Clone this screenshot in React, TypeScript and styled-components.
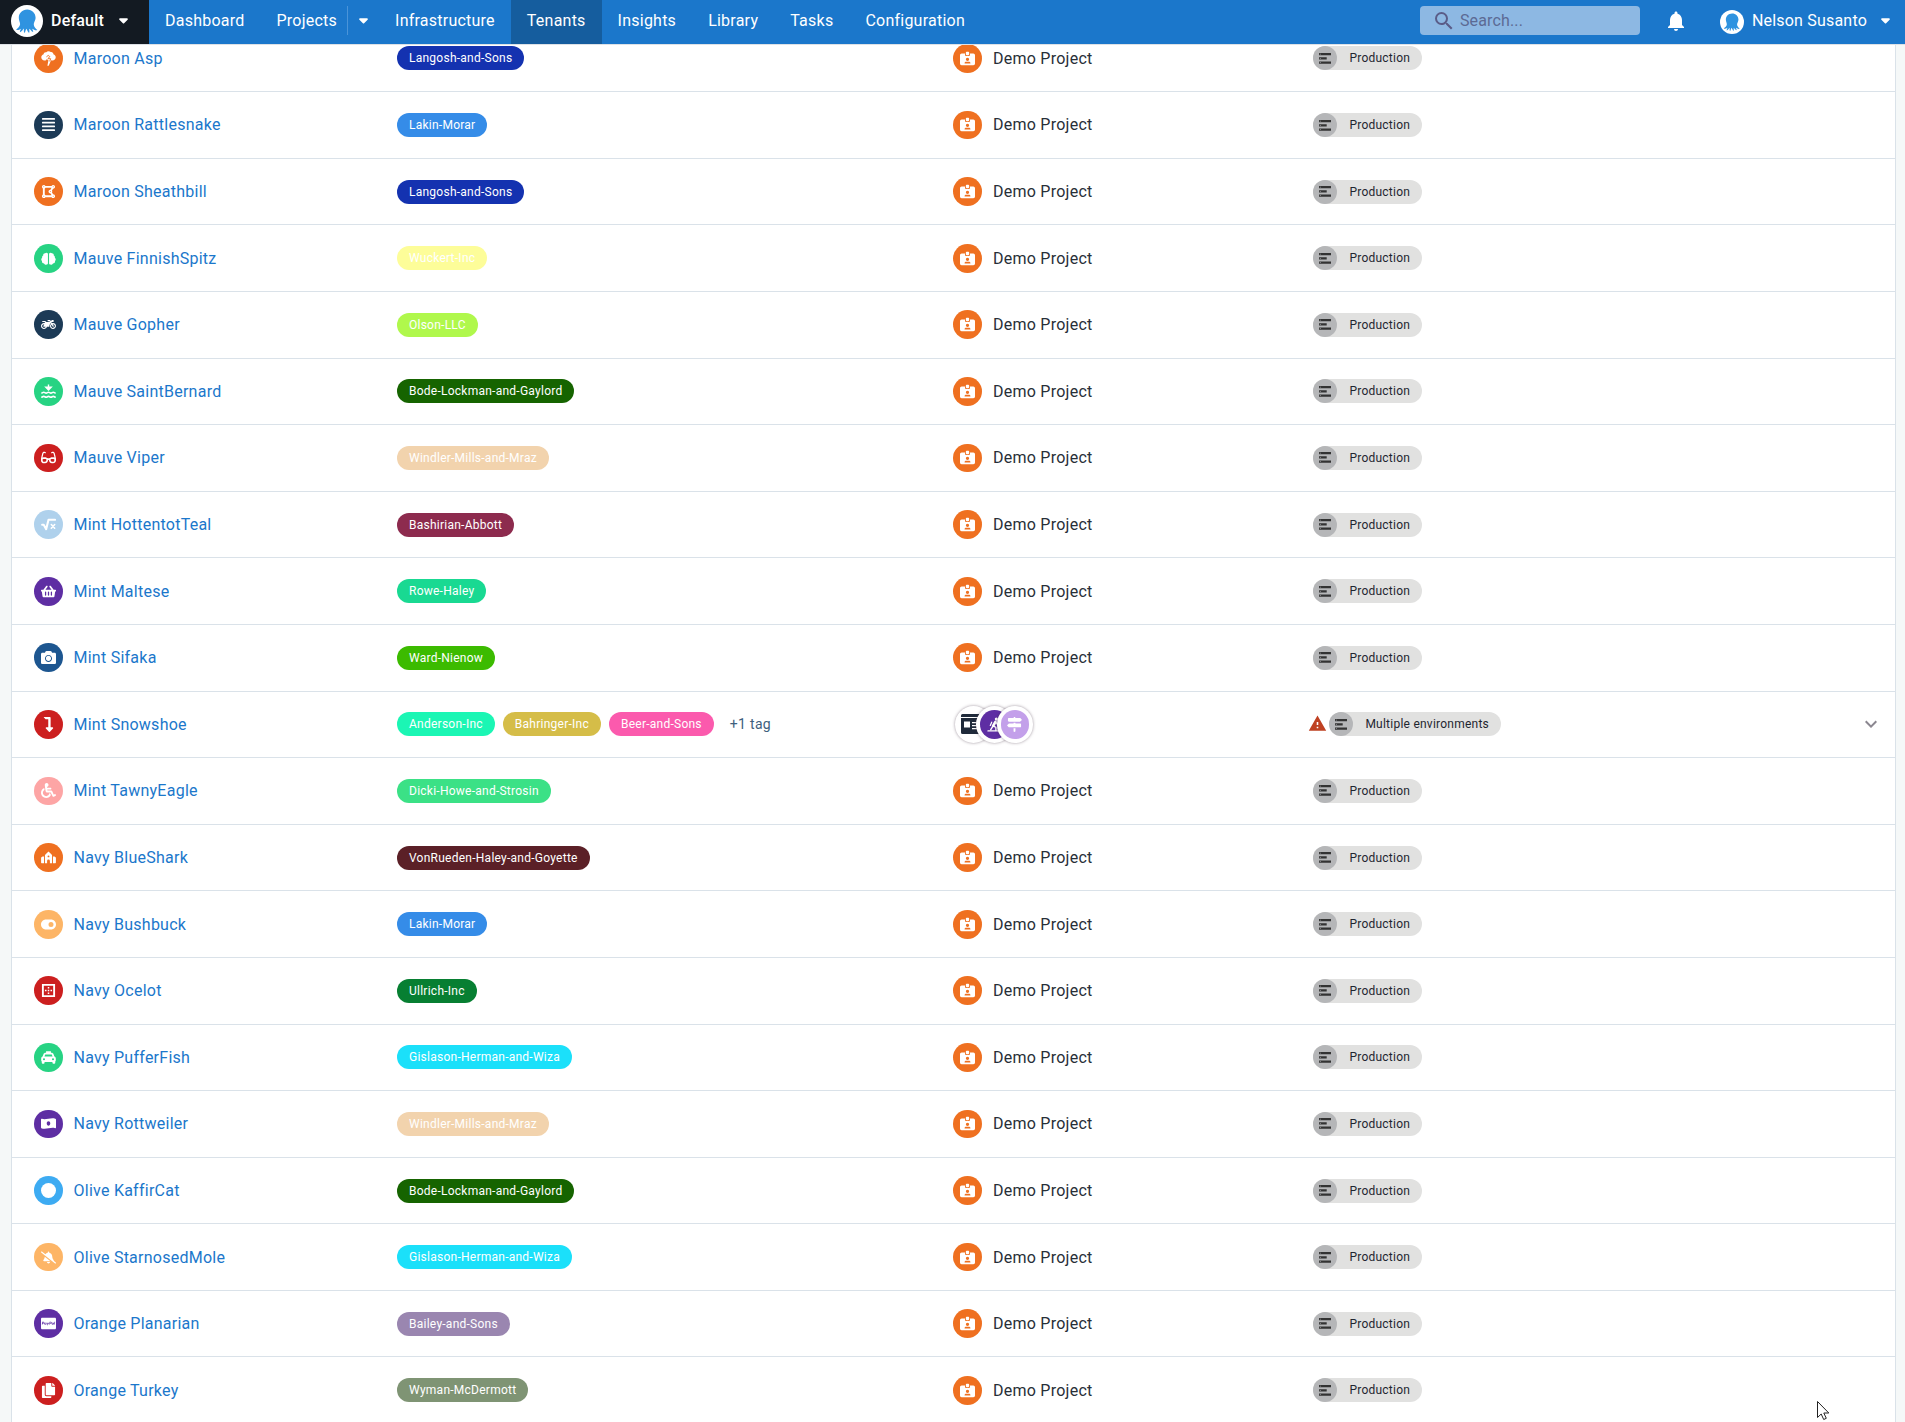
import React from "react";
import styled, { createGlobalStyle } from "styled-components";
import {
  FaAlignJustify,
  FaBellSlash,
  FaCaretDown,
  FaCcPaypal,
  FaCircle,
  FaGlasses,
  FaIdCardClip,
  FaSignsPost,
  FaToggleOn,
} from "react-icons/fa6";
import {
  FaCamera,
  FaCopy,
  FaDrawPolygon,
  FaLevelDownAlt,
  FaMotorcycle,
  FaShoppingBasket,
  FaWheelchair,
} from "react-icons/fa";
import { MdNotifications, MdSearch, MdWarning, MdKeyboardArrowDown } from "react-icons/md";

const GlobalStyle = createGlobalStyle`
  * { box-sizing: border-box; }
  html, body { margin: 0; padding: 0; }
  body {
    font-family: Roboto, "Liberation Sans", sans-serif;
    font-size: 16px;
    background: #f5f8f8;
    overflow: hidden;
  }
`;

const Page = styled.div`
  display: flex;
  flex-direction: column;
  height: 1422px;
  overflow: hidden;
  background: #f5f8f8;
`;

const Header = styled.header`
  display: flex;
  align-items: stretch;
  flex: none;
  height: 44px;
  background: #1b77cb;
  color: #fff;
  letter-spacing: 0.235px;
`;

const SpaceSwitcher = styled.button`
  display: flex;
  align-items: center;
  width: 149px;
  padding: 0 0 2px 11px;
  border: 0;
  background: #131a22;
  color: #fff;
  font: 500 16px Roboto, sans-serif;
  letter-spacing: 0.2px;
  text-align: left;
`;

const SpaceName = styled.span`
  flex: 1;
  padding: 0 0 1px 8px;
`;

const Caret = styled(FaCaretDown)<{ $right?: number; $lift?: number }>`
  flex: none;
  width: 9px;
  height: 14px;
  margin: 0 ${(p) => p.$right ?? 0}px ${(p) => p.$lift ?? 0}px 0;
`;

const Nav = styled.nav`
  display: flex;
  flex: 1;
`;

const NavItem = styled.a<{ $active?: boolean }>`
  display: flex;
  align-items: center;
  padding: 0 16px 3px;
  background: ${(p) => (p.$active ? "#155d9e" : "transparent")};
`;

const ProjectsMenu = styled.div`
  display: flex;
  align-items: center;
  width: 32px;
  height: 29px;
  margin: 6px 0 0 -6px;
  padding: 0 0 2px 11px;
  border-left: 1px solid #4a94d9;
`;

const Tools = styled.div`
  display: flex;
  align-items: center;
`;

const SearchBox = styled.div`
  display: flex;
  align-items: center;
  width: 220px;
  height: 29px;
  margin: 0 23px 3px 0;
  padding-left: 12px;
  gap: 4px;
  border-radius: 4px;
  background: #8db8e3;
  color: #5c6a94;
  letter-spacing: 0.15px;
  svg { color: #5a5c88; }
`;

const SearchHint = styled.span`
  padding-bottom: 1px;
`;

const Bell = styled.span`
  display: flex;
  width: 24px;
  margin: 0 32px 3px 1px;
`;

const UserName = styled.span`
  padding: 0 0 3px 8px;
  margin-right: 14px;
  letter-spacing: 0.2px;
`;

const Viewport = styled.main`
  flex: 1;
  min-height: 0;
  overflow: hidden;
  border-top: 1px solid #dde1e6;
`;

const Card = styled.section`
  width: 1885px;
  margin: -19.4px 0 0 11px;
  border: 1px solid #dae2e9;
  border-width: 0 1px;
  background: #fff;
`;

const Row = styled.div`
  display: grid;
  grid-template-columns: 363px 556px 360px 1fr 24px;
  align-items: center;
  height: 66.6px;
  padding: 0 12px 0 22px;
  border-bottom: 1px solid #dae2e9;
`;

const Entity = styled.div<{ $gap?: number }>`
  display: flex;
  align-items: center;
  gap: ${(p) => p.$gap ?? 10.7}px;
`;

const Disc = styled.span<{ $color: string; $glyph?: number }>`
  display: flex;
  align-items: center;
  justify-content: center;
  width: 28.8px;
  height: 28.8px;
  border-radius: 50%;
  background: ${(p) => p.$color};
  color: #fff;
  svg { width: ${(p) => p.$glyph ?? 15}px; height: ${(p) => p.$glyph ?? 15}px; }
`;

const TenantLink = styled.a`
  padding-top: 1px;
  color: #1b77cb;
  letter-spacing: 0.25px;
  line-height: 24px;
`;

const ProjectName = styled.span`
  padding-top: 1px;
  color: #282f38;
  letter-spacing: 0.25px;
  line-height: 24px;
`;

const Tags = styled.div`
  display: flex;
  align-items: center;
  gap: 8px;
`;

const Tag = styled.span<{ $color: string }>`
  height: 24px;
  padding: 0 12px;
  border-radius: 12px;
  background: ${(p) => p.$color};
  color: #fff;
  font-size: 12px;
  line-height: 24px;
  letter-spacing: 0.25px;
`;

const MoreTags = styled.span`
  margin-left: 8px;
  color: #3e607d;
  font-size: 14px;
  letter-spacing: 0.3px;
`;

const EnvCell = styled.div<{ $warn?: boolean }>`
  display: flex;
  align-items: center;
  gap: 2px;
  margin-left: ${(p) => (p.$warn ? -5 : 0)}px;
  svg.warn { color: #bf4122; margin-bottom: 2px; }
`;

const EnvChip = styled.span`
  display: flex;
  height: 24px;
  padding-right: 12px;
  gap: 12.4px;
  border-radius: 12px;
  background: #e1e1e0;
  color: #1f2630;
  font-size: 12px;
  line-height: 24px;
  letter-spacing: 0.24px;
`;

const EnvMark = styled.span`
  display: flex;
  align-items: center;
  justify-content: center;
  width: 24px;
  height: 24px;
  border-radius: 50%;
  background: #b5b6b8;
`;

const Stack = styled.div`
  display: flex;
  padding-left: 2px;
`;

const StackItem = styled.span`
  display: flex;
  padding: 4px;
  border-radius: 50%;
  background: #fff;
  box-shadow: 0 0 3px rgba(60, 40, 60, 0.5);
  & + & { margin-left: -16px; }
`;

const Expand = styled.span`
  display: flex;
  justify-content: center;
  color: #8b8790;
`;

const Pointer = styled.svg`
  position: fixed;
  left: 1816px;
  top: 1400px;
`;

const Octopus = ({ size }: { size: number }) => (
  <svg width={size} height={size} viewBox="0 0 32 32">
    <circle cx="16" cy="16" r="16" fill="#fff" />
    <path
      fill="#2f93e0"
      d="M16.2 4.6c-5 0-8.400 3.700-8.400 8.300 0 2.600 1.500 4.300 1.300 6.400-.2 2.300-2.300 3.700-4 5.400 1.800.7 3.300-.1 4.700-1-.1 1.300-1.200 2.500-.8 3.500 1.700-.5 2.700-2.200 3.800-3.600.4 1.500-.6 3.600.9 4.400.7-1.300.9-3 1.700-4.200.9 1.200 1.300 3.100 2.700 4.100.8-1.300-.1-2.800.3-4.100 1.200.9 2 3 3.700 3.200.4-1.200-.7-2.200-.9-3.300 1.600.6 3 2.100 5.200 1.400-1.700-1.700-3.200-2.900-3.600-5.100-.4-2.200 1.800-4.600 1.800-7 0-4.800-3.600-8.400-8.400-8.400z"
    />
  </svg>
);

const StormIcon = () => (
  <svg viewBox="0 0 16 16" fill="currentColor">
    <path d="M8 .3c-1 0-1.800.4-2.300 1C4.200 1 2.800 2 2.800 3.400 1.300 3.800.3 5.100.3 6.700c0 1.900 1.500 3.500 3.400 3.500 1 0 1.700-.3 2.300-.9l2 .6-1.200 5.900h1.400l2.500-6c.5.300 1 .4 1.500.4 1.900 0 3.500-1.500 3.500-3.500 0-1.600-1-2.900-2.500-3.300 0-1.500-1.300-2.600-2.800-2.300C9.800.6 8.900.3 8 .3z" />
    <path d="M5.800 6.200 7.700 4.700l1.600 1.200L7.500 8.200h2.800l-1 2.800M5.600 10.300l1-1.600" fill="none" stroke="#ef7020" strokeWidth="1" />
  </svg>
);

const BrainIcon = () => (
  <svg viewBox="0 0 16 16" fill="currentColor">
    <path d="M7.400 2.800C7 1.600 5.200 1.300 4.300 2.500 2.900 2.500 2.200 3.600 2.400 4.800 1.200 5.300.9 6.500 1.300 7.300.1 8-.1 9.800 1 10.600c-.1 1.500.9 2.600 2.200 2.700.8 1.700 3.600 1.900 4.200.1zM8.600 2.800c.4-1.200 2.200-1.500 3.100-.3 1.400 0 2.100 1.100 1.900 2.300 1.200.5 1.500 1.700 1.100 2.500 1.200.7 1.400 2.500.3 3.300.1 1.500-.9 2.600-2.200 2.700-.8 1.700-3.600 1.900-4.200.1z" />
  </svg>
);

const RootIcon = () => (
  <svg viewBox="0 0 16 16" fill="none" stroke="currentColor" strokeWidth="2.200" strokeLinejoin="round" strokeLinecap="round">
    <path d="M1.200 8.300h1.700l2.600 4.700L8 3h7" />
    <path d="M11 8l3.600 4M14.600 8 11 12" strokeWidth="1.700" />
  </svg>
);

const ClimberIcon = () => (
  <svg viewBox="0 0 16 16" fill="none" stroke="currentColor" strokeLinecap="round" strokeLinejoin="round">
    <circle cx="10" cy="2.200" r="1.700" fill="currentColor" stroke="none" />
    <path d="M9 5.300 6.500 9.500" strokeWidth="2.800" />
    <path d="M6.500 9.500 9.500 11v3.500M6.500 9.500 4 13.500M9.500 5.500l2 3h2" strokeWidth="1.500" />
    <path d="M5 5.500 3.500 9M1 14.900h13.500M13.500 6v8.500" strokeWidth="1.300" />
  </svg>
);

const WorshipIcon = () => (
  <svg viewBox="0 0 16 16" fill="currentColor">
    <path fillRule="evenodd" d="M8 1.500l3.300 3.300c.3.300.5.600.5 1V14H9.500v-2.400a1.500 1.500 0 0 0-3 0V14H4.200V5.800c0-.4.200-.7.500-1zM8 5.800a1 1 0 1 0 0 2 1 1 0 0 0 0-2z" />
    <path d="M3.200 7v7H.7a.6.600 0 0 1-.6-.6V8.600c0-.3.100-.6.400-.8L1.600 6.900zM12.800 7v7h2.500c.3 0 .6-.3.600-.6V8.600c0-.3-.1-.6-.4-.8l-1.100-.9z" />
  </svg>
);

const TaxiIcon = () => (
  <svg viewBox="0 0 16 16" fill="currentColor">
    <path fillRule="evenodd" d="M5.400 1.300h5.200v1.700h.6c1 0 1.800.6 2.200 1.500l.9 2.500c.9.300 1.500 1.100 1.500 2v2c0 .5-.3.900-.6 1.200v1.500c0 .6-.4 1-1 1h-1c-.6 0-1-.4-1-1v-1H3.800v1c0 .6-.4 1-1 1h-1c-.6 0-1-.4-1-1v-1.500C.500 11.900.2 11.500.2 11V9c0-.9.600-1.700 1.500-2l.9-2.500C3 3.600 3.800 3 4.800 3h.6zM4.800 4.900c-.2 0-.4.100-.5.400L3.700 7h8.600l-.6-1.700c-.1-.3-.3-.4-.5-.4zM3.200 8.700a1.100 1.100 0 1 0 0 2.200 1.100 1.100 0 0 0 0-2.200zM12.800 8.700a1.100 1.100 0 1 0 0 2.200 1.100 1.100 0 0 0 0-2.200z" />
  </svg>
);

const BanknoteIcon = () => (
  <svg viewBox="0 0 16 16" fill="currentColor">
    <path fillRule="evenodd" d="M0 3.700c0-.5.400-.8.900-.7 4.700 1.400 9.400-1.700 14.300-.2.500.1.800.5.800.9v8.600c0 .5-.4.900-.9.700-4.700-1.400-9.400 1.700-14.300.2-.5-.1-.8-.5-.8-.9zM8 5.700c-1 0-1.900 1-1.900 2.300s.9 2.300 1.900 2.300S9.900 9.300 9.900 8 9 5.700 8 5.700z" />
  </svg>
);

const DiveIcon = () => (
  <svg viewBox="0 0 16 16" fill="none" stroke="currentColor" strokeWidth="1.700">
    <path d="M8 .5v4M5.200 3.500h5.600L8 6.300z" fill="currentColor" strokeWidth="1.500" />
    <path d="M.3 9.600c1.300 0 1.500-.8 2.600-.8s1.400.9 2.600.9S7 8.800 8 8.800s1.400.9 2.600.9 1.400-.9 2.500-.9 1.300.8 2.600.8" />
    <path d="M.3 14c1.300 0 1.500-.8 2.600-.8s1.400.9 2.600.9 1.500-.9 2.500-.9 1.400.9 2.600.9 1.400-.9 2.500-.9 1.300.8 2.600.8" />
  </svg>
);

const BorderIcon = () => (
  <svg viewBox="0 0 16 16" fill="currentColor">
    <path fillRule="evenodd" d="M1 1h14v14H1zM3 3v10h10V3z" />
    <path d="M7.200 4.200h1.600v1.700H7.200zM7.200 7.200h1.600v1.600H7.200zM7.200 10.100h1.600v1.700H7.200zM4.200 7.200h1.700v1.600H4.200zM10.100 7.200h1.700v1.600h-1.700z" />
  </svg>
);

const EnvironmentIcon = () => (
  <svg width="12" height="11" viewBox="0 0 12 11" fill="#333">
    <path d="M0 0h12v2.300H0zM0 4.300h7.700v2.200H0zM0 8.500h12v2.300H0z" />
    <path fill="#96979a" d="M.8.700h1.200v.9H.8zM.8 5h1.200v.8H.8zM.8 9.200h1.200v.9H.8z" />
  </svg>
);

const BrowserIcon = () => (
  <svg viewBox="0 0 24 20" fill="#1f2a3a">
    <path fillRule="evenodd" d="M1.500 0h21A1.500 1.500 0 0 1 24 1.500V3H0V1.500A1.500 1.500 0 0 1 1.500 0zM0 4h24v14.500a1.500 1.500 0 0 1-1.500 1.500h-21A1.500 1.500 0 0 1 0 18.500zM3 7.500v6h6v-6zM11 8v1.300h10V8zM11 11v1.300h10V11zM11 14v1.300h10V14z" />
  </svg>
);

type Tenant = {
  name: string;
  color: string;
  icon: React.ReactNode;
  tags: string[];
  multiple?: boolean;
};

const tagColors: Record<string, string> = {
  "Langosh-and-Sons": "#1432b0",
  "Lakin-Morar": "#358ce8",
  "Wuckert-Inc": "#fdfd99",
  "Olson-LLC": "#b0f84c",
  "Bode-Lockman-and-Gaylord": "#166400",
  "Windler-Mills-and-Mraz": "#f2d3ad",
  "Bashirian-Abbott": "#8d2b4e",
  "Rowe-Haley": "#19d992",
  "Ward-Nienow": "#3cbb00",
  "Anderson-Inc": "#1bf6b4",
  "Bahringer-Inc": "#d5bd48",
  "Beer-and-Sons": "#fb5aad",
  "Dicki-Howe-and-Strosin": "#3be186",
  "VonRueden-Haley-and-Goyette": "#5b2027",
  "Ullrich-Inc": "#077f32",
  "Gislason-Herman-and-Wiza": "#1be0fa",
  "Bailey-and-Sons": "#9a86b0",
  "Wyman-McDermott": "#7f9474",
};

const orange = "#ef7020";
const navy = "#1c3a56";
const green = "#27d383";
const red = "#cc1f1f";
const purple = "#5e2ea3";
const peach = "#fdb566";

const tenants: Tenant[] = [
  { name: "Maroon Asp", color: orange, icon: <StormIcon />, tags: ["Langosh-and-Sons"] },
  { name: "Maroon Rattlesnake", color: navy, icon: <FaAlignJustify />, tags: ["Lakin-Morar"] },
  { name: "Maroon Sheathbill", color: orange, icon: <FaDrawPolygon />, tags: ["Langosh-and-Sons"] },
  { name: "Mauve FinnishSpitz", color: green, icon: <BrainIcon />, tags: ["Wuckert-Inc"] },
  { name: "Mauve Gopher", color: navy, icon: <FaMotorcycle />, tags: ["Olson-LLC"] },
  { name: "Mauve SaintBernard", color: green, icon: <DiveIcon />, tags: ["Bode-Lockman-and-Gaylord"] },
  { name: "Mauve Viper", color: red, icon: <FaGlasses />, tags: ["Windler-Mills-and-Mraz"] },
  { name: "Mint HottentotTeal", color: "#afd1ec", icon: <RootIcon />, tags: ["Bashirian-Abbott"] },
  { name: "Mint Maltese", color: purple, icon: <FaShoppingBasket />, tags: ["Rowe-Haley"] },
  { name: "Mint Sifaka", color: "#1d5690", icon: <FaCamera />, tags: ["Ward-Nienow"] },
  { name: "Mint Snowshoe", color: red, icon: <FaLevelDownAlt />, tags: ["Anderson-Inc", "Bahringer-Inc", "Beer-and-Sons"], multiple: true },
  { name: "Mint TawnyEagle", color: "#fda5a5", icon: <FaWheelchair />, tags: ["Dicki-Howe-and-Strosin"] },
  { name: "Navy BlueShark", color: orange, icon: <WorshipIcon />, tags: ["VonRueden-Haley-and-Goyette"] },
  { name: "Navy Bushbuck", color: peach, icon: <FaToggleOn />, tags: ["Lakin-Morar"] },
  { name: "Navy Ocelot", color: red, icon: <BorderIcon />, tags: ["Ullrich-Inc"] },
  { name: "Navy PufferFish", color: green, icon: <TaxiIcon />, tags: ["Gislason-Herman-and-Wiza"] },
  { name: "Navy Rottweiler", color: purple, icon: <BanknoteIcon />, tags: ["Windler-Mills-and-Mraz"] },
  { name: "Olive KaffirCat", color: "#3dabf2", icon: <FaCircle />, tags: ["Bode-Lockman-and-Gaylord"] },
  { name: "Olive StarnosedMole", color: peach, icon: <FaBellSlash />, tags: ["Gislason-Herman-and-Wiza"] },
  { name: "Orange Planarian", color: purple, icon: <FaCcPaypal />, tags: ["Bailey-and-Sons"] },
  { name: "Orange Turkey", color: red, icon: <FaCopy />, tags: ["Wyman-McDermott"] },
];

const TenantRow = ({ tenant }: { tenant: Tenant }) => (
  <Row>
    <Entity>
      <Disc $color={tenant.color}>{tenant.icon}</Disc>
      <TenantLink>{tenant.name}</TenantLink>
    </Entity>
    <Tags>
      {tenant.tags.map((t) => (
        <Tag key={t} $color={tagColors[t]}>{t}</Tag>
      ))}
      {tenant.multiple && <MoreTags>+1 tag</MoreTags>}
    </Tags>
    {tenant.multiple ? (
      <Stack>
        <StackItem><Disc $color="#fff" $glyph={24}><BrowserIcon /></Disc></StackItem>
        <StackItem><Disc $color={purple}><ClimberIcon /></Disc></StackItem>
        <StackItem><Disc $color="#c3a0ea"><FaSignsPost /></Disc></StackItem>
      </Stack>
    ) : (
      <Entity $gap={11.2}>
        <Disc $color={orange}><FaIdCardClip /></Disc>
        <ProjectName>Demo Project</ProjectName>
      </Entity>
    )}
    <EnvCell $warn={tenant.multiple}>
      {tenant.multiple && <MdWarning className="warn" size={19} />}
      <EnvChip>
        <EnvMark><EnvironmentIcon /></EnvMark>
        {tenant.multiple ? "Multiple environments" : "Production"}
      </EnvChip>
    </EnvCell>
    {tenant.multiple && <Expand><MdKeyboardArrowDown size={24} /></Expand>}
  </Row>
);

export default function App() {
  return (
    <Page>
      <GlobalStyle />
      <Header>
        <SpaceSwitcher>
          <Octopus size={32} />
          <SpaceName>Default</SpaceName>
          <Caret $right={21} $lift={2} />
        </SpaceSwitcher>
        <Nav>
          <NavItem>Dashboard</NavItem>
          <NavItem>Projects</NavItem>
          <ProjectsMenu><Caret /></ProjectsMenu>
          <NavItem>Infrastructure</NavItem>
          <NavItem $active>Tenants</NavItem>
          <NavItem>Insights</NavItem>
          <NavItem>Library</NavItem>
          <NavItem>Tasks</NavItem>
          <NavItem>Configuration</NavItem>
        </Nav>
        <Tools>
          <SearchBox>
            <MdSearch size={24} />
            <SearchHint>Search...</SearchHint>
          </SearchBox>
          <Bell><MdNotifications size={24} /></Bell>
          <Octopus size={24} />
          <UserName>Nelson Susanto</UserName>
          <Caret $right={15} $lift={4} />
        </Tools>
      </Header>
      <Viewport>
        <Card>
          {tenants.map((t) => (
            <TenantRow key={t.name} tenant={t} />
          ))}
        </Card>
      </Viewport>
      <Pointer width="14" height="22" viewBox="0 0 14 22">
        <path d="M1.500 1.500v16l3.700-3.500 2.500 5.500 2.600-1.200L7.800 13h5z" fill="#fff" stroke="#222" />
      </Pointer>
    </Page>
  );
}
